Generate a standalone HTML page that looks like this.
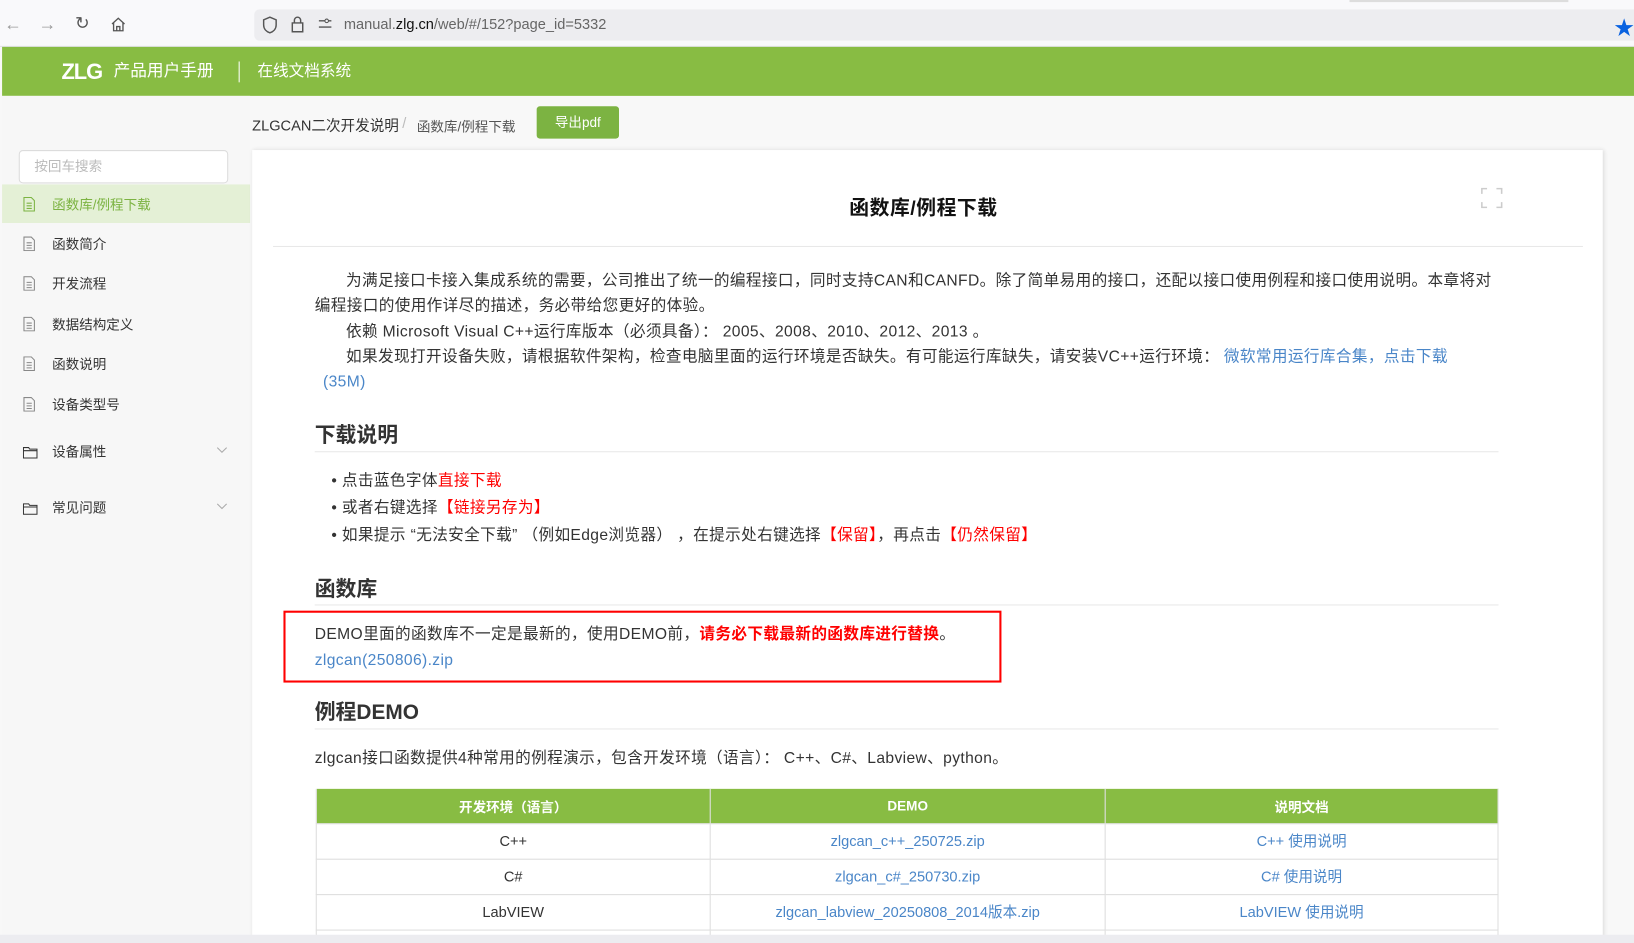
<!DOCTYPE html>
<html><head><meta charset="utf-8"><style>
*{margin:0;padding:0;box-sizing:border-box}
html,body{width:1634px;height:943px;overflow:hidden;background:#f8f8f8}
body{font-family:"Liberation Sans","Noto Sans CJK SC",sans-serif;color:#333}
#w{position:absolute;left:0;top:0;width:1568px;height:905px;overflow:hidden;transform:scale(1.04209);transform-origin:0 0;background:#f8f8f8}
.a{position:absolute;white-space:nowrap}
.tb{left:0;top:0;width:1568px;height:45px;background:#f9f9fb;border-bottom:1px solid #e0e0e4}
.url{left:244px;top:9px;width:1330px;height:30px;background:#ededf0;border-radius:5px}
.hd{left:2px;top:45px;width:1566px;height:47px;background:#88bc43}
.side{left:2px;top:92px;width:238px;height:805px;background:#f7f7f7}
.main{left:242px;top:144px;width:1296px;height:760px;background:#fff;box-shadow:1px 0 4px rgba(0,0,0,.12)}
.it{left:2px;width:238px;height:37px;font-size:13px;color:#333;line-height:37px;padding-left:48px}
.it svg{position:absolute;left:20px;top:11px}
.p{font-size:15px;color:#333;line-height:24px;letter-spacing:0.35px}
.h2{font-size:20px;font-weight:bold;color:#333}
.hr{height:1px;background:#e8e8e8;left:302px;width:1136px}
.lk{color:#4a86c8}
.r{color:#f00}
table{position:absolute;left:303px;top:757px;width:1135px;border-collapse:collapse;font-size:14px}
th{background:#88bc43;color:#fff;height:33px;font-size:13px;border:1px solid #ddd;border-top:none}
td{height:34px;text-align:center;border:1px solid #ddd}
</style></head><body><div id="w">
<div class="a" style="left:0;top:0;width:1568px;height:5px;background:#f0f0f4"></div>
<div class="a tb"></div>
<div class="a" style="left:1295px;top:0;width:210px;height:2px;background:#ddd"></div>
<div class="a" style="left:4px;top:14px;font-size:17px;color:#999">←</div>
<div class="a" style="left:37px;top:14px;font-size:17px;color:#999">→</div>
<div class="a" style="left:72px;top:13px;font-size:17px;color:#555">↻</div>
<svg class="a" style="left:106px;top:16px" width="15" height="15" viewBox="0 0 15 15"><path d="M1.5 7L7.5 1.5 13.5 7M3 6v7.5h9V6M6 13.5V9.5h3v4" fill="none" stroke="#555" stroke-width="1.3"/></svg>
<div class="a url"></div>
<svg class="a" style="left:251px;top:15px" width="16" height="18" viewBox="0 0 16 18"><path d="M8 1.5L2 4v5c0 4 3 6.5 6 7.5 3-1 6-3.5 6-7.5V4z" fill="none" stroke="#555" stroke-width="1.4"/></svg>
<svg class="a" style="left:279px;top:15px" width="13" height="17" viewBox="0 0 13 17"><path d="M3.5 7V4.5a3 3 0 016 0V7M1.5 7h10v8.5h-10z" fill="none" stroke="#555" stroke-width="1.4"/></svg>
<svg class="a" style="left:305px;top:17px" width="14" height="12" viewBox="0 0 14 12"><path d="M1 3h6M1 9h12M10 3h3" stroke="#555" stroke-width="1.3"/><circle cx="8.5" cy="3" r="1.7" fill="none" stroke="#555"/></svg>
<div class="a" style="left:330px;top:15px;font-size:14px;color:#666">manual.<span style="color:#111">zlg.cn</span>/web/#/152?page_id=5332</div>
<div class="a" style="left:1549px;top:12px;font-size:19px;color:#0a62e0">★</div>
<div class="a hd"></div>
<div class="a" style="left:59px;top:58px;font-size:21px;font-weight:bold;color:#fff;letter-spacing:-1px">ZLG</div>
<div class="a" style="left:109px;top:59px;font-size:16px;line-height:20px;color:#fff">产品用户手册</div>
<div class="a" style="left:229px;top:59px;width:1px;height:20px;background:#fff"></div>
<div class="a" style="left:247px;top:59px;font-size:15px;line-height:20px;color:#fff">在线文档系统</div>
<div class="a side"></div>
<div class="a" style="left:242px;top:110px;font-size:14px;color:#333">ZLGCAN二次开发说明</div>
<div class="a" style="left:386px;top:110px;font-size:14px;color:#bbb">/</div>
<div class="a" style="left:400px;top:111px;font-size:13px;color:#555">函数库/例程下载</div>
<div class="a" style="left:515px;top:102px;width:79px;height:31px;background:#7cb342;border-radius:3px;color:#fff;font-size:13px;line-height:31px;text-align:center">导出pdf</div>
<div class="a" style="left:18px;top:144px;width:201px;height:32px;border:1px solid #dcdcdc;border-radius:4px;background:#fff;font-size:13px;color:#bbb;line-height:30px;padding-left:14px">按回车搜索</div>
<div class="a" style="left:2px;top:177px;width:238px;height:37px;background:#e4f0d6"></div>
<div class="a it" style="top:178px;color:#7cb342"><svg width="12" height="14"><path d="M1 .5h7l3 3v10H1z M3.5 6h5M3.5 8.5h5M3.5 11h5" fill="none" stroke="#7cb342"/></svg>函数库/例程下载</div>
<div class="a it" style="top:216px"><svg width="12" height="14"><path d="M1 .5h7l3 3v10H1z M3.5 6h5M3.5 8.5h5M3.5 11h5" fill="none" stroke="#888"/></svg>函数简介</div>
<div class="a it" style="top:254px"><svg width="12" height="14"><path d="M1 .5h7l3 3v10H1z M3.5 6h5M3.5 8.5h5M3.5 11h5" fill="none" stroke="#888"/></svg>开发流程</div>
<div class="a it" style="top:293px"><svg width="12" height="14"><path d="M1 .5h7l3 3v10H1z M3.5 6h5M3.5 8.5h5M3.5 11h5" fill="none" stroke="#888"/></svg>数据结构定义</div>
<div class="a it" style="top:331px"><svg width="12" height="14"><path d="M1 .5h7l3 3v10H1z M3.5 6h5M3.5 8.5h5M3.5 11h5" fill="none" stroke="#888"/></svg>函数说明</div>
<div class="a it" style="top:370px"><svg width="12" height="14"><path d="M1 .5h7l3 3v10H1z M3.5 6h5M3.5 8.5h5M3.5 11h5" fill="none" stroke="#888"/></svg>设备类型号</div>
<div class="a it" style="top:415px"><svg width="14" height="14" style="top:12px"><path d="M.5 2.5h5l1 1.5h7v8.5H.5z M.5 5.5h13" fill="none" stroke="#333"/></svg>设备属性</div>
<div class="a it" style="top:469px"><svg width="14" height="14" style="top:12px"><path d="M.5 2.5h5l1 1.5h7v8.5H.5z M.5 5.5h13" fill="none" stroke="#333"/></svg>常见问题</div>
<svg class="a" style="left:208px;top:429px" width="10" height="6"><path d="M.5.5L5 5 9.5.5" fill="none" stroke="#aaa"/></svg>
<svg class="a" style="left:208px;top:483px" width="10" height="6"><path d="M.5.5L5 5 9.5.5" fill="none" stroke="#aaa"/></svg>
<div class="a main"></div>
<div class="a" style="left:815px;top:185px;font-size:19px;font-weight:bold;color:#111;letter-spacing:0.5px">函数库/例程下载</div>
<svg class="a" style="left:1421px;top:180px" width="21" height="20" viewBox="0 0 21 20"><path d="M1 6V1h5M15 1h5v5M20 14v5h-5M6 19H1v-5" fill="none" stroke="#ccc" stroke-width="1.5"/></svg>
<div class="a" style="left:262px;top:236px;width:1257px;height:1px;background:#e8e8e8"></div>
<div class="a p" style="left:332px;top:258px">为满足接口卡接入集成系统的需要，公司推出了统一的编程接口，同时支持CAN和CANFD。除了简单易用的接口，还配以接口使用例程和接口使用说明。本章将对</div>
<div class="a p" style="left:302px;top:282px">编程接口的使用作详尽的描述，务必带给您更好的体验。</div>
<div class="a p" style="left:332px;top:307px">依赖 Microsoft Visual C++运行库版本（必须具备）： 2005、2008、2010、2012、2013 。</div>
<div class="a p" style="left:332px;top:331px">如果发现打开设备失败，请根据软件架构，检查电脑里面的运行环境是否缺失。有可能运行库缺失，请安装VC++运行环境： <span class="lk">微软常用运行库合集，点击下载</span></div>
<div class="a p lk" style="left:310px;top:355px">(35M)</div>
<div class="a h2" style="left:302px;top:401px">下载说明</div>
<div class="a hr" style="top:433px"></div>
<div class="a p" style="left:318px;top:450px">• 点击蓝色字体<span class="r">直接下载</span></div>
<div class="a p" style="left:318px;top:476px">• 或者右键选择<span class="r">【链接另存为】</span></div>
<div class="a p" style="left:318px;top:502px">• 如果提示 “无法安全下载” （例如Edge浏览器） ，在提示处右键选择<span class="r">【保留】</span>，再点击<span class="r">【仍然保留】</span></div>
<div class="a h2" style="left:302px;top:549px">函数库</div>
<div class="a hr" style="top:580px"></div>
<div class="a" style="left:272px;top:586px;width:689px;height:69px;border:2px solid #f00"></div>
<div class="a p" style="left:302px;top:597px">DEMO里面的函数库不一定是最新的，使用DEMO前，<b class="r">请务必下载最新的函数库进行替换</b>。</div>
<div class="a p lk" style="left:302px;top:622px">zlgcan(250806).zip</div>
<div class="a h2" style="left:302px;top:667px">例程DEMO</div>
<div class="a hr" style="top:699px"></div>
<div class="a p" style="left:302px;top:716px">zlgcan接口函数提供4种常用的例程演示，包含开发环境（语言）： C++、C#、Labview、python。</div>
<table>
<tr><th style="width:378px">开发环境（语言）</th><th style="width:379px">DEMO</th><th>说明文档</th></tr>
<tr><td>C++</td><td class="lk">zlgcan_c++_250725.zip</td><td class="lk">C++ 使用说明</td></tr>
<tr><td>C#</td><td class="lk">zlgcan_c#_250730.zip</td><td class="lk">C# 使用说明</td></tr>
<tr><td>LabVIEW</td><td class="lk">zlgcan_labview_20250808_2014版本.zip</td><td class="lk">LabVIEW 使用说明</td></tr>
<tr><td>&nbsp;</td><td></td><td></td></tr>
</table>
<div class="a" style="left:0;top:897px;width:1568px;height:20px;background:#ececf0"></div>
</div></body></html>
